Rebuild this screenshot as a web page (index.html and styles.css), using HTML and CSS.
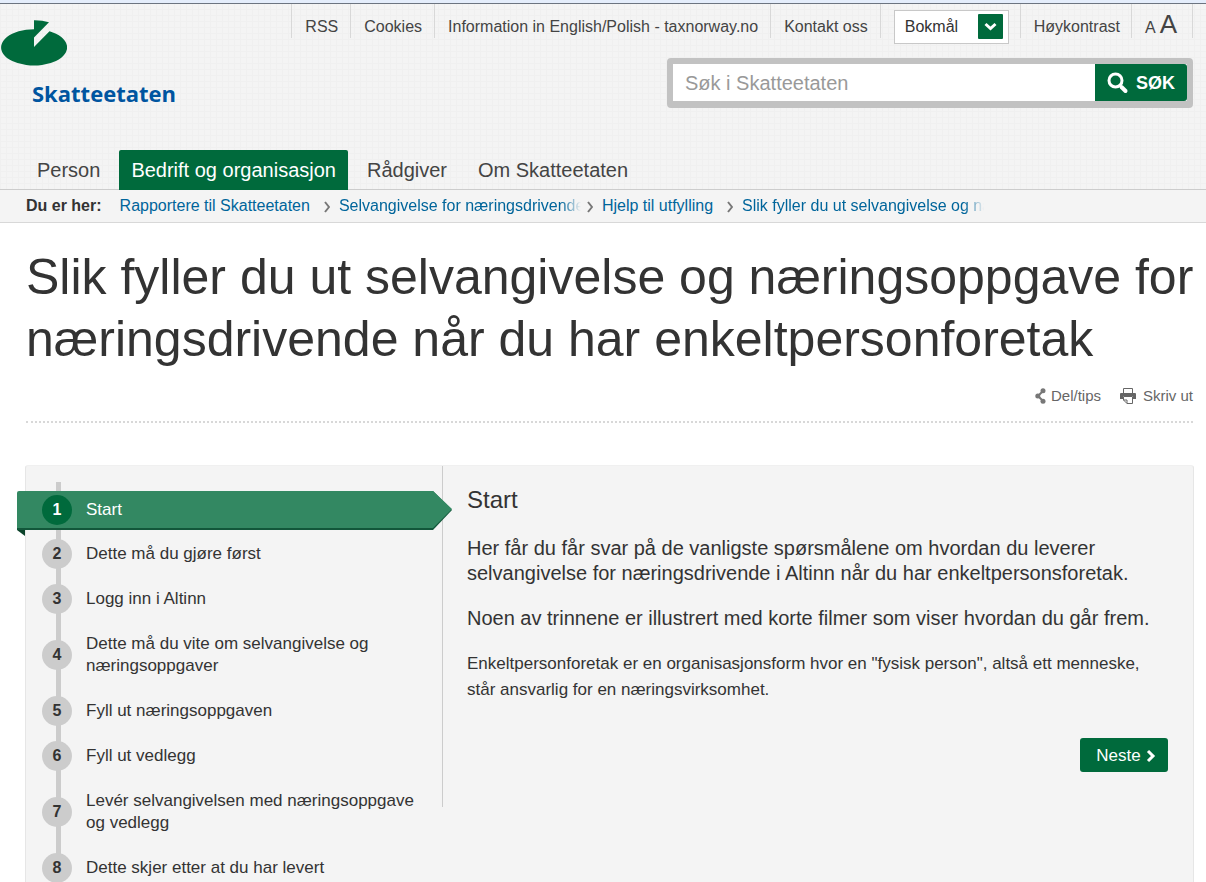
FILE: index.html
```html
<!DOCTYPE html>
<html lang="nb">
<head>
<meta charset="utf-8">
<title>Slik fyller du ut selvangivelse og næringsoppgave - Skatteetaten</title>
<meta name="viewport" content="width=device-width, initial-scale=1">
<link rel="stylesheet" href="styles.css">
</head>
<body>
<header class="site-header">
  <div class="header-top">
    <a class="logo" href="#">
      <svg class="logo-mark" viewBox="0 0 66 46" width="66" height="46" aria-hidden="true">
        <path fill="#006a3c" d="M33 9.200V27L48.500 11.300A33 18.200 0 1 1 33 9.200Z"/>
        <path fill="#006a3c" d="M33 0.300Q41 0.200 48 2.200L33 17.500Z"/>
      </svg>
      <span class="logo-name">Skatteetaten</span>
    </a>
    <div class="header-tools">
      <nav class="service-nav" aria-label="Tjenester">
        <a class="service-item" href="#">RSS</a>
        <a class="service-item" href="#">Cookies</a>
        <a class="service-item" href="#">Information in English/Polish - taxnorway.no</a>
        <a class="service-item" href="#">Kontakt oss</a>
        <div class="service-item language">
          <select class="language-select" aria-label="Språk">
            <option>Bokmål</option>
            <option>Nynorsk</option>
          </select>
          <svg class="language-arrow" viewBox="0 0 25 25" width="25" height="25" aria-hidden="true">
            <rect width="25" height="25" rx="1" fill="#006a3c"/>
            <path d="M7.500 10l5 4.500 5-4.500" fill="none" stroke="#fff" stroke-width="3"/>
          </svg>
        </div>
        <a class="service-item contrast" href="#">Høykontrast</a>
        <a class="service-item text-size" href="#" aria-label="Tekststørrelse"><span class="small-a">A</span><span class="large-a">A</span></a>
      </nav>
      <form class="search">
        <input class="search-input" type="search" placeholder="Søk i Skatteetaten" aria-label="Søk i Skatteetaten">
        <button class="search-button" type="button">
          <svg viewBox="0 0 22 22" width="22" height="22" aria-hidden="true">
            <circle cx="8.500" cy="8.500" r="6.500" fill="none" stroke="#fff" stroke-width="3"/>
            <path d="M14.500 15l4 4" stroke="#fff" stroke-width="4" stroke-linecap="round"/>
          </svg>
          SØK
        </button>
      </form>
    </div>
  </div>
  <nav class="main-nav" aria-label="Hovedmeny">
    <a class="main-link" href="#">Person</a>
    <a class="main-link active" href="#">Bedrift og organisasjon</a>
    <a class="main-link" href="#">Rådgiver</a>
    <a class="main-link" href="#">Om Skatteetaten</a>
  </nav>
</header>
<nav class="breadcrumb" aria-label="Du er her">
  <strong class="crumb-label">Du er her:</strong>
  <a class="crumb" href="#">Rapportere til Skatteetaten</a>
  <svg class="crumb-arrow" viewBox="0 0 6 12" width="6" height="12" aria-hidden="true"><path d="M1 1l4 5-4 5"/></svg>
  <a class="crumb fade" href="#">Selvangivelse for næringsdrivende</a>
  <svg class="crumb-arrow" viewBox="0 0 6 12" width="6" height="12" aria-hidden="true"><path d="M1 1l4 5-4 5"/></svg>
  <a class="crumb" href="#">Hjelp til utfylling</a>
  <svg class="crumb-arrow" viewBox="0 0 6 12" width="6" height="12" aria-hidden="true"><path d="M1 1l4 5-4 5"/></svg>
  <a class="crumb fade" href="#">Slik fyller du ut selvangivelse og næringsoppgave</a>
</nav>
<main class="page">
  <h1 class="page-title">Slik fyller du ut selvangivelse og næringsoppgave for næringsdrivende når du har enkeltpersonforetak</h1>
  <div class="page-tools">
    <a class="tool" href="#">
      <svg viewBox="0 0 11 16" width="11" height="16" aria-hidden="true">
        <path d="M8 3L3 8l5 5" fill="none" stroke="#777" stroke-width="2"/>
        <circle cx="8" cy="2.800" r="2.500" fill="#777"/><circle cx="2.800" cy="8" r="2.500" fill="#777"/><circle cx="8" cy="13.200" r="2.500" fill="#777"/>
      </svg>
      Del/tips</a>
    <a class="tool print" href="#">
      <svg viewBox="0 0 16 16" width="16" height="16" aria-hidden="true">
        <path d="M3.500 5V0.500h9V5" fill="#fff" stroke="#666" stroke-width="1"/>
        <path d="M1 5h14q1 0 1 1v5h-3V8H3v3H0V6q0-1 1-1Z" fill="#666"/>
        <path d="M3.500 8.500h9v7H7L3.500 12ZM3.500 12H7v3.500" fill="#fff" stroke="#666" stroke-width="1"/>
      </svg>
      Skriv ut</a>
  </div>
  <section class="guide">
    <ol class="steps">
      <li class="step current">
        <svg class="ribbon-end" viewBox="0 0 20 39" width="20" height="39" aria-hidden="true"><path d="M0 0h1L20 19 1 39H0Z" fill="#12573a"/><path d="M0 0h1L20 18 1 37H0Z" fill="#338862"/></svg>
        <a class="step-link" href="#"><span class="step-number">1</span><span>Start</span></a>
      </li>
      <li class="step"><a class="step-link" href="#"><span class="step-number">2</span><span>Dette må du gjøre først</span></a></li>
      <li class="step"><a class="step-link" href="#"><span class="step-number">3</span><span>Logg inn i Altinn</span></a></li>
      <li class="step"><a class="step-link" href="#"><span class="step-number">4</span><span>Dette må du vite om selvangivelse og næringsoppgaver</span></a></li>
      <li class="step"><a class="step-link" href="#"><span class="step-number">5</span><span>Fyll ut næringsoppgaven</span></a></li>
      <li class="step"><a class="step-link" href="#"><span class="step-number">6</span><span>Fyll ut vedlegg</span></a></li>
      <li class="step"><a class="step-link" href="#"><span class="step-number">7</span><span>Levér selvangivelsen med næringsoppgave og vedlegg</span></a></li>
      <li class="step"><a class="step-link" href="#"><span class="step-number">8</span><span>Dette skjer etter at du har levert</span></a></li>
    </ol>
    <article class="content">
      <h2 class="content-title">Start</h2>
      <p class="lead">Her får du får svar på de vanligste spørsmålene om hvordan du leverer selvangivelse for næringsdrivende i Altinn når du har enkeltpersonsforetak.</p>
      <p class="lead">Noen av trinnene er illustrert med korte filmer som viser hvordan du går frem.</p>
      <p class="text">Enkeltpersonforetak er en organisasjonsform hvor en "fysisk person", altså ett menneske, står ansvarlig for en næringsvirksomhet.</p>
      <button class="next" type="button">Neste
        <svg viewBox="0 0 10 14" width="10" height="14" aria-hidden="true"><path d="M2 2l5 5-5 5" fill="none" stroke="#fff" stroke-width="3"/></svg>
      </button>
    </article>
  </section>
</main>
</body>
</html>
```
FILE: styles.css
```css
* {
  box-sizing: border-box;
}

body {
  margin: 0;
  background: #fff;
  color: #333;
  font: 16px/22px "Liberation Sans", Arial, sans-serif;
}

a {
  color: inherit;
  text-decoration: none;
}

button,
input,
select {
  font: inherit;
}

/* Header */
.site-header {
  border-top: 3px solid #e4edfb;
  border-bottom: 1px solid #ccc;
  background-color: #f4f4f4;
  background-image:
    linear-gradient(#f0f0f0 1px, transparent 1px),
    linear-gradient(90deg, #f0f0f0 1px, transparent 1px);
  background-size: 6px 6px;
}

.header-top {
  display: flex;
  justify-content: space-between;
  height: 147px;
  padding-right: 13px;
  border-top: 1px solid #6c7480;
}

.logo {
  display: flex;
  flex-direction: column;
  padding: 16px 0 0 1px;
}

.logo-name {
  padding: 11px 0 0 31px;
  color: #0055a0;
  font: bold 22px/32px "Open Sans", "Noto Sans", sans-serif;
}

.header-tools {
  display: flex;
  flex-direction: column;
  align-items: flex-end;
}

.service-nav {
  display: flex;
  height: 34px;
  margin-bottom: 20px;
  border-right: 1px solid #d8d8d8;
  color: #444;
}

.service-item {
  padding: 12px 12px 0 13px;
  border-left: 1px solid #d8d8d8;
  white-space: nowrap;
}

.contrast {
  padding-right: 11px;
}

.language {
  position: relative;
  padding: 6px 11px 0 13px;
}

.language-select {
  width: 115px;
  height: 34px;
  padding: 0 36px 0 10px;
  border: 1px solid #c8c8c8;
  border-radius: 0;
  background: #fff;
  color: #333;
  appearance: none;
}

.language-arrow {
  position: absolute;
  top: 10px;
  right: 17px;
  pointer-events: none;
}

.text-size {
  display: flex;
  align-items: baseline;
  gap: 4px;
  padding: 9px 15px 0 13px;
}

.large-a {
  font-size: 26px;
}

.search {
  display: flex;
  width: 526px;
  height: 50px;
  border: 6px solid #c2c2c2;
  border-bottom-width: 7px;
  border-radius: 4px;
}

.search-input {
  flex: 1;
  min-width: 0;
  padding: 0 12px;
  border: 0;
  background: #fff;
  font-size: 20px;
  appearance: none;
}

.search-input::placeholder {
  color: #999;
}

.search-button {
  display: flex;
  align-items: center;
  justify-content: center;
  gap: 7px;
  width: 92px;
  padding: 0;
  border: 0;
  border-radius: 0 3px 3px 0;
  background: #006a3c;
  color: #fff;
  font-size: 18px;
  font-weight: bold;
}

.main-nav {
  display: flex;
  gap: 7px;
  padding-left: 25px;
}

.main-link {
  margin-bottom: -1px;
  padding: 1px 12px 0;
  border-radius: 2px 2px 0 0;
  color: #444;
  font-size: 20px;
  line-height: 39px;
}

.main-link.active {
  background: #006a3c;
  color: #fff;
}

/* Breadcrumb */
.breadcrumb {
  display: flex;
  align-items: center;
  height: 33px;
  padding: 0 26px;
  border-bottom: 1px solid #d8d8d8;
  background: #f4f4f4;
  white-space: nowrap;
}

.crumb-label {
  margin-right: 18px;
}

.crumb {
  max-width: 242px;
  padding-right: 8px;
  overflow: hidden;
  color: #00659b;
}

.crumb.fade {
  mask-image: linear-gradient(90deg, #000 calc(100% - 20px), transparent);
}

.crumb-arrow {
  flex: none;
  margin: 1px 9px 0 6px;
  fill: none;
  stroke: #777;
  stroke-width: 2;
}

/* Page */
.page {
  padding: 23px 12px 0 25px;
}

.page-title {
  margin: 0 0 15px;
  padding-left: 1px;
  font-size: 50px;
  font-weight: normal;
  line-height: 62px;
}

.page-tools {
  display: flex;
  justify-content: flex-end;
  gap: 19px;
  margin: 0 1px 42px;
  padding-bottom: 14px;
  border-bottom: 2px dotted #d8d8d8;
  color: #666;
  font-size: 15px;
}

.tool {
  display: flex;
  align-items: center;
  gap: 5px;
}

.print {
  gap: 7px;
}

/* Guide */
.guide {
  display: grid;
  grid-template-columns: 416px 1fr;
  border: 1px solid #e6e6e6;
  border-top-color: #f0f0f0;
  border-radius: 3px;
  background: #f4f4f4;
}

.steps {
  margin: 16px 0 20px;
  padding: 5px 0 0;
  background: linear-gradient(#ccc, #ccc) 30px 0 / 5px 100% no-repeat;
  font-size: 17px;
  list-style: none;
}

.step-link {
  display: flex;
  align-items: center;
  gap: 14px;
  padding: 11px 20px 12px 16px;
}

.step-number {
  flex: none;
  width: 30px;
  height: 30px;
  margin: -4px 0;
  border-radius: 50%;
  background: #ccc;
  font-size: 16px;
  font-weight: bold;
  line-height: 30px;
  text-align: center;
}

.current {
  position: relative;
  margin-left: -9px;
  color: #fff;
}

.current .step-link {
  height: 39px;
  margin: 4px 10px 2px 0;
  padding: 0 0 0 25px;
  border-bottom: 2px solid #12573a;
  border-radius: 2px 0 0 0;
  background: #338862;
}

.current .step-number {
  background: #006a3c;
}

.current::after {
  position: absolute;
  top: 100%;
  left: 0;
  border-top: 6px solid #0a4229;
  border-left: 8px solid transparent;
  content: "";
}

.ribbon-end {
  position: absolute;
  top: 0;
  right: -10px;
}

.content {
  align-self: start;
  padding: 21px 25px 35px 24px;
  border-left: 1px solid #ccc;
}

.content-title {
  margin: 0 0 23px;
  font-size: 24px;
  font-weight: normal;
  line-height: 26px;
}

.lead {
  margin: 0 0 20px;
  font-size: 20px;
  line-height: 25px;
}

.text {
  margin: 0 0 35px;
  font-size: 17px;
  line-height: 26px;
}

.next {
  display: flex;
  align-items: center;
  justify-content: center;
  gap: 5px;
  width: 88px;
  height: 34px;
  margin-left: auto;
  padding: 2px 0 0 4px;
  border: 0;
  border-radius: 3px;
  background: #006a3c;
  color: #fff;
  font-size: 17px;
}
```
